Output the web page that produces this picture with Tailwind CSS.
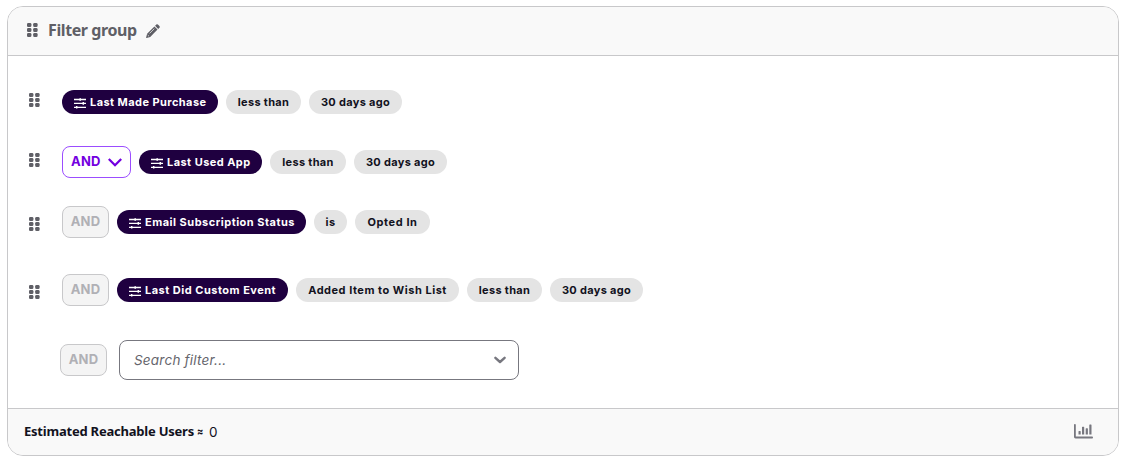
<!DOCTYPE html>
<html lang="en">
<head>
<meta charset="utf-8">
<title>Filter group</title>
<script src="https://cdn.jsdelivr.net/npm/@tailwindcss/browser@4"></script>
</head>
<body class="bg-white font-['Inter',sans-serif] text-[#12121d]">
<svg class="hidden">
  <symbol id="grip" viewBox="0 0 11 14">
    <rect x="0" y="0" width="4.4" height="4" rx="1.3"/><rect x="6.2" y="0" width="4.4" height="4" rx="1.3"/>
    <rect x="0" y="5" width="4.4" height="4" rx="1.3"/><rect x="6.2" y="5" width="4.4" height="4" rx="1.3"/>
    <rect x="0" y="10" width="4.4" height="4" rx="1.3"/><rect x="6.2" y="10" width="4.4" height="4" rx="1.3"/>
  </symbol>
  <symbol id="sliders" viewBox="0 0 12 12">
    <path d="M0 2.500H12M0 6.400H12M0 10.300H12" stroke="currentColor" stroke-width="1.300"/>
    <path d="M6.200 1.200v2.600M9.300 5.100v2.600M2.700 9v2.600" stroke="currentColor" stroke-width="1.500"/>
  </symbol>
</svg>
<main class="ml-[7px] mt-[6px] flex h-[450px] w-[1112px] flex-col overflow-hidden rounded-2xl border border-[#c8c8ca] bg-white">
  <header class="flex h-[49px] shrink-0 items-center border-b border-[#c8c8ca] bg-[#f9f9f9] pl-[19px] text-[#5f5f66]">
    <svg class="mb-[3px] h-[14px] w-[11px] fill-current"><use href="#grip"/></svg>
    <h1 class="mb-0.5 ml-[10px] w-[98px] whitespace-nowrap font-['Noto_Sans',sans-serif] text-base font-bold tracking-[-0.4px]">Filter group</h1>
    <svg class="mb-px h-[14px] w-[14px]" viewBox="0 0 14 14" fill="currentColor"><path d="M10.300.6q.8-.8 1.600 0l1.500 1.500q.8.800 0 1.600L12.200 4.900 9.100 1.800zM8.400 2.500l3.100 3.100-7.300 7.300L.6 13.900q-.6.100-.5-.5l1-3.600z"/><path d="M3.600 9.400L8.300 4.700M1.700 11l1.300 1.300" stroke="#f9f9f9" stroke-width=".7" fill="none"/></svg>
  </header>

  <section class="flex grow flex-col pt-[30px] text-[11px] font-bold tracking-[0.32px]">
    <div class="flex h-8 items-center gap-2 pl-[21px]">
      <svg class="mr-[14px] mb-[5px] h-[14px] w-[11px] fill-[#5f5f66]"><use href="#grip"/></svg>
      <div class="flex h-6 w-[156px] items-center gap-1 whitespace-nowrap rounded-full bg-[#1f0040] pl-3 tracking-[0.43px] text-white"><svg class="mt-0.5 h-3 w-3 shrink-0"><use href="#sliders"/></svg><span>Last Made Purchase</span></div>
      <div class="flex h-6 w-[75px] items-center justify-center rounded-full bg-[#e4e4e4]">less than</div>
      <div class="flex h-6 w-[93px] items-center justify-center rounded-full bg-[#e4e4e4]">30 days ago</div>
    </div>
    <div class="mt-7 flex h-8 items-center gap-2 pl-[21px]">
      <svg class="mr-[14px] mb-[5px] h-[14px] w-[11px] fill-[#5f5f66]"><use href="#grip"/></svg>
      <button class="flex h-8 w-[69px] items-center justify-between rounded-lg border border-[#9b4dff] pl-2 pr-2 text-[13px] tracking-[0.2px] text-[#7300e0]">AND<svg class="h-[9px] w-[14px]" viewBox="0 0 14 9" fill="none" stroke="currentColor" stroke-width="2.3"><path d="M.8 1l6.200 6.200L13.200 1"/></svg></button>
      <div class="flex h-6 w-[123px] items-center gap-1 whitespace-nowrap rounded-full bg-[#1f0040] pl-3 tracking-[0.45px] text-white"><svg class="mt-0.5 h-3 w-3 shrink-0"><use href="#sliders"/></svg><span>Last Used App</span></div>
      <div class="flex h-6 w-[76px] items-center justify-center rounded-full bg-[#e4e4e4]">less than</div>
      <div class="flex h-6 w-[93px] items-center justify-center rounded-full bg-[#e4e4e4]">30 days ago</div>
    </div>
    <div class="mt-7 flex h-8 items-center gap-2 pl-[21px]">
      <svg class="mr-[14px] mt-[3px] h-[14px] w-[11px] fill-[#5f5f66]"><use href="#grip"/></svg>
      <button class="h-8 w-[47px] rounded-lg border border-[#c8c8ca] bg-[#f4f4f4] text-[13px] tracking-[0.2px] text-[#b0b0b5]">AND</button>
      <div class="flex h-6 w-[189px] items-center gap-1 whitespace-nowrap rounded-full bg-[#1f0040] pl-3 tracking-[0.49px] text-white"><svg class="mt-0.5 h-3 w-3 shrink-0"><use href="#sliders"/></svg><span>Email Subscription Status</span></div>
      <div class="flex h-6 w-[33px] items-center justify-center rounded-full bg-[#e4e4e4]">is</div>
      <div class="flex h-6 w-[75px] items-center justify-center rounded-full bg-[#e4e4e4] tracking-[0.6px]">Opted In</div>
    </div>
    <div class="mt-9 flex h-8 items-center gap-2 pl-[21px]">
      <svg class="mr-[14px] mt-[3px] h-[14px] w-[11px] fill-[#5f5f66]"><use href="#grip"/></svg>
      <button class="h-8 w-[47px] rounded-lg border border-[#c8c8ca] bg-[#f4f4f4] text-[13px] tracking-[0.2px] text-[#b0b0b5]">AND</button>
      <div class="flex h-6 w-[171px] items-center gap-1 whitespace-nowrap rounded-full bg-[#1f0040] pl-3 tracking-[0.49px] text-white"><svg class="mt-0.5 h-3 w-3 shrink-0"><use href="#sliders"/></svg><span>Last Did Custom Event</span></div>
      <div class="flex h-6 w-[163px] items-center justify-center rounded-full bg-[#e4e4e4] tracking-[0.51px]">Added Item to Wish List</div>
      <div class="flex h-6 w-[75px] items-center justify-center rounded-full bg-[#e4e4e4]">less than</div>
      <div class="flex h-6 w-[93px] items-center justify-center rounded-full bg-[#e4e4e4]">30 days ago</div>
    </div>
    <div class="mt-[34px] flex h-10 items-center gap-3 pl-[52px]">
      <button class="h-8 w-[47px] rounded-lg border border-[#c8c8ca] bg-[#f4f4f4] text-[13px] tracking-[0.2px] text-[#b0b0b5]">AND</button>
      <div class="flex h-10 w-[400px] items-center justify-between rounded-lg border border-[#77777f] pl-[14px] pr-3 text-[13.500px] font-normal italic tracking-[0.22px] text-[#65656c]">Search filter...<svg class="h-[8px] w-[12px]" viewBox="0 0 12 8" fill="none" stroke="#77777f" stroke-width="2.4" stroke-linecap="round" stroke-linejoin="round"><path d="M1.400 1.800L6 6l4.600-4.200"/></svg></div>
    </div>
  </section>

  <footer class="flex h-[47px] shrink-0 items-center border-t border-[#c8c8ca] bg-[#f9f9f9] pl-4 pr-[25px]">
    <span class="w-[170px] whitespace-nowrap font-['Noto_Sans',sans-serif] text-[13px] font-bold tracking-[-0.22px]">Estimated Reachable Users</span>
    <span class="mb-0.5 ml-[3px] w-3 text-[11px] font-bold"><span class="inline-block origin-left scale-x-85">≈</span></span>
    <span class="text-[13.500px]">0</span>
    <svg class="ml-auto mb-0.5 h-[15px] w-[19px]" viewBox="0 0 19 15" fill="#77777f"><path d="M0 .8Q0 0 .9 0t.9.8V12.600H18.200q.8 0 .8.900t-.8.900H1.500Q0 14.400 0 13zM4.500 7.500q0-.5.500-.5h1.200q.5 0 .5.500v3H4.500zM8 3.200q0-.5.500-.5h1.200q.5 0 .5.500v7.300H8zM11.700 4.800q0-.5.500-.5h1.200q.5 0 .5.500v5.700h-2.200zM15.300.9q0-.5.500-.5H17q.5 0 .5.500v9.600h-2.200z"/></svg>
  </footer>
</main>
</body>
</html>
